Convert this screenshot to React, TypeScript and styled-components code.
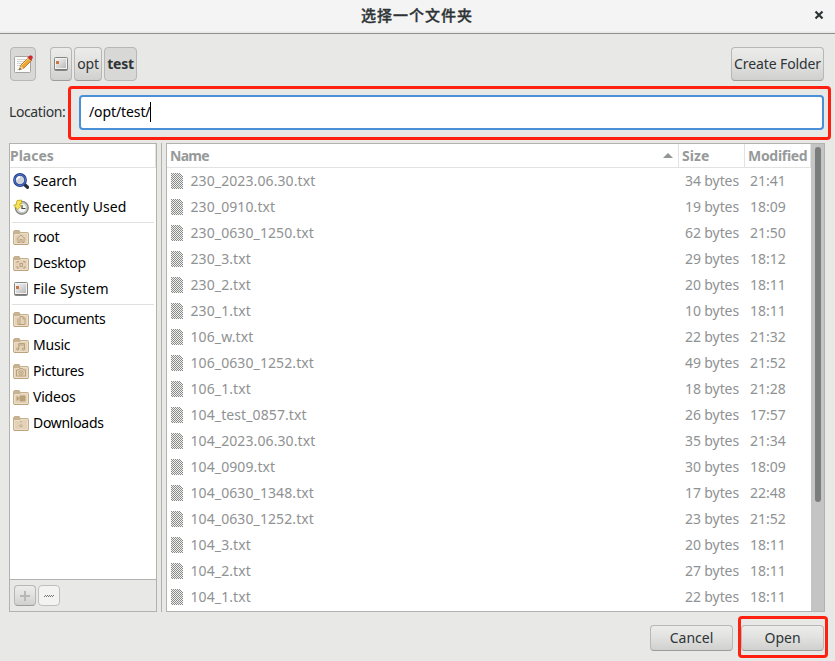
import React from "react";
import styled, { createGlobalStyle, css } from "styled-components";

const GlobalStyle = createGlobalStyle`
  * { box-sizing: border-box; }
  body { margin: 0; background: #e8e8e7; overflow: hidden; }
  svg { display: block; flex: none; }
`;

const Dialog = styled.main`
  width: 835px;
  height: 661px;
  display: flex;
  flex-direction: column;
  background: #e8e8e6;
  color: #2e3436;
  font-family: "Noto Sans", "Noto Sans CJK SC", sans-serif;
  font-size: 14px;
  line-height: 20px;
  white-space: nowrap;
`;

const TitleBar = styled.header`
  height: 34px;
  flex: none;
  display: grid;
  grid-template-columns: 32px 1fr 32px;
  align-items: center;
  padding-bottom: 3px;
  background: linear-gradient(#f4f4f4 31px, #e8e8e8 32px);
  border-bottom: 1px solid #8f8f8f;
`;

const Title = styled.h1`
  margin: 0 1px 1px 0;
  font: 500 15px/20px "Noto Sans CJK SC", sans-serif;
  -webkit-text-stroke: 0.35px #2e3436;
  letter-spacing: 1px;
  text-align: center;
`;

const Toolbar = styled.div`
  height: 34px;
  margin: 13px 11px 0 10px;
  display: flex;
`;

const Path = styled.nav`
  display: flex;
  gap: 2px;
  margin-left: 14px;
`;

const Button = styled.button<{ $w: number; $pressed?: boolean; $spacing?: number }>`
  width: ${(p) => p.$w}px;
  height: 100%;
  padding: 0;
  display: flex;
  align-items: center;
  justify-content: center;
  border: 1px solid #b7b7b3;
  border-bottom-color: #9d9d98;
  border-radius: 4px;
  background: linear-gradient(#ececeb, #e2e2e1 45%, #d0d0ce);
  color: #2e3436;
  font: inherit;
  letter-spacing: ${(p) => p.$spacing ?? 0}px;
  ${(p) =>
    p.$pressed &&
    css`
      background: #d8d8d7;
      border-color: #b7b7b5;
      font-weight: bold;
    `}
`;

const CreateButton = styled(Button)`
  margin-left: auto;
`;

const LocationRow = styled.div`
  height: 35px;
  margin: 14px 11px 0 9px;
  display: flex;
  align-items: center;
`;

const LocationLabel = styled.label`
  width: 70px;
  padding-bottom: 2px;
  letter-spacing: -0.4px;
`;

const Entry = styled.div`
  position: relative;
  flex: 1;
  height: 35px;
  display: flex;
  align-items: center;
  padding: 0 0 2px 8px;
  border: 2px solid #4a90d9;
  border-radius: 4px;
  background: #fff;
  color: #000;
  letter-spacing: -0.1px;
`;

const Caret = styled.span`
  width: 1px;
  height: 20px;
  background: #000;
`;

const Highlight = styled.span<{ $box: string }>`
  position: absolute;
  inset: ${(p) => p.$box};
  border: 3px solid #ff200f;
  border-radius: 4px;
  pointer-events: none;
`;

const Panes = styled.div`
  height: 469px;
  margin: 13px 10px 0 9px;
  display: grid;
  grid-template-columns: 148px 9px 1fr;
`;

const Splitter = styled.div`
  width: 1px;
  margin-left: 4px;
  background: #b2b2b0;
`;

const Sidebar = styled.aside`
  display: flex;
  flex-direction: column;
  border: 1px solid #b2b2ae;
  background: #fff;
  color: #000;
`;

const HeaderCell = styled.div<{ $spacing?: number }>`
  display: flex;
  align-items: center;
  height: 24px;
  border-right: 1px solid #e2e2e1;
  border-bottom: 1px solid #e2e2e1;
  color: #979a9a;
  font-weight: bold;
  letter-spacing: ${(p) => p.$spacing ?? 0}px;
`;

const Place = styled.div<{ $spacing: number }>`
  height: 26px;
  display: flex;
  align-items: center;
  gap: 4px;
  padding-left: 3px;
  letter-spacing: ${(p) => p.$spacing}px;
`;

const Separator = styled.hr`
  width: 142px;
  height: 1px;
  margin: 2px 2px 1px;
  border: 0;
  background: #e0e0df;
`;

const SidebarActions = styled.div`
  height: 32px;
  margin-top: auto;
  display: flex;
  gap: 2px;
  padding: 5px 4px;
  border-top: 1px solid #b2b2ae;
  background: #e8e8e6;
`;

const RemoveButton = styled(Button)`
  background: #f3f3f2;
  border-color: #c0c0ba;
`;

const FileView = styled.section`
  display: flex;
  border: 1px solid #b2b2ae;
  background: #fff;
`;

const FileTable = styled.div`
  flex: 1;
`;

const FileHeader = styled.div`
  display: grid;
  grid-template-columns: 512px 66px 66px;
  ${HeaderCell} { padding-left: 3px; }
`;

const SortArrow = styled.svg`
  margin: 0 5px 0 auto;
`;

const FileRow = styled.div`
  height: 26px;
  display: grid;
  grid-template-columns: 19.5px 484.5px 64px 1fr;
  align-items: center;
  padding-left: 4px;
  color: #8f9293;
`;

const FileName = styled.span`
  letter-spacing: 0.1px;
`;

const FileSize = styled.span`
  letter-spacing: -0.1px;
  text-align: right;
`;

const FileTime = styled.span`
  padding-left: 11px;
`;

const ScrollTrack = styled.div`
  width: 13px;
  padding: 3px 3px 0 4px;
  background: #c3c4c3;
`;

const ScrollThumb = styled.div`
  height: 355px;
  border-radius: 3px;
  background: #7b7d7d;
`;

const Actions = styled.footer`
  height: 26px;
  margin: 13px 11px 0 auto;
  display: flex;
  gap: 8px;
`;

const OpenWrap = styled.div`
  position: relative;
`;

const EditIcon = () => (
  <svg width="20" height="20" viewBox="0 0 20 20">
    <rect x="1.5" y="2.5" width="16" height="16" rx="1" fill="#fcfcfb" stroke="#a4a4a1" />
    <path d="M4 5.5h9M4 7.5h8M4 9.5h6M4 11.5h4M4 15.5h5" stroke="#c4c4c4" strokeWidth=".7" />
    <path d="M6 16l2-5 8-8 3 3-8 8z" fill="#f0a52e" stroke="#93611e" strokeWidth=".7" />
    <path d="M8.5 11.5l7-7" stroke="#ffd57a" />
    <path d="M6 16l2-4 2.5 2.5z" fill="#f4d2a0" />
    <path d="M6 16l1-2 1 1z" fill="#333" />
    <path d="M15 3.5l1.5-1.5q2-1 3 1 0 1.5-2 3z" fill="#df2828" stroke="#a81b1b" strokeWidth=".6" />
    <path d="M14.3 4.2l2.7 2.6" stroke="#c6c6c6" />
  </svg>
);

const DriveIcon = () => (
  <svg width="16" height="16" viewBox="0 0 16 16">
    <defs>
      <linearGradient id="drive" x2="1" y2="1">
        <stop stopColor="#f4f4f4" />
        <stop offset="1" stopColor="#b9b9b9" />
      </linearGradient>
    </defs>
    <rect x="1.5" y="1.5" width="13" height="13" rx="1" fill="#f2f2f2" stroke="#858581" />
    <rect x="3" y="3" width="10" height="9" fill="url(#drive)" />
    <path d="M2 13.5h12" stroke="#777" />
    <path d="M3 5h3v3H3z" fill="#c87943" />
  </svg>
);

const SearchIcon = () => (
  <svg width="16" height="16" viewBox="0 0 16 16">
    <path d="M11 11l3.5 3.3" stroke="#292c36" strokeWidth="3.3" strokeLinecap="round" />
    <circle cx="7" cy="7" r="5.6" fill="#cfd3da" stroke="#23408e" strokeWidth="2.6" />
    <circle cx="7" cy="7" r="5.5" fill="none" stroke="#5578cc" />
    <path d="M4 7q0-3 3-3" fill="none" stroke="#fff" strokeWidth="1.4" />
  </svg>
);

const RecentIcon = () => (
  <svg width="16" height="16" viewBox="0 0 16 16">
    <circle cx="8.8" cy="8.8" r="6.4" fill="#d6d6d1" stroke="#858781" strokeWidth="1.4" />
    <circle cx="9" cy="9" r="4.6" fill="#f6f6f3" stroke="#b4b5b0" strokeWidth=".7" />
    <path d="M9 6v3.5h3.5" fill="none" stroke="#444" strokeWidth="1.2" />
    <path d="M8.5 1L4 1.6 3 6H.6l4 4.6L9 6.3H6.6L7 4.5h1.5z" fill="#f6e35b" stroke="#c4a71d" strokeWidth=".8" />
  </svg>
);

const folderMarks: Record<string, React.ReactNode> = {
  root: <path d="M3.5 10L8 6l4.5 4M5 9.5v4h2v-3h2v3h2v-4" />,
  Desktop: <><path d="M4 8V6.5h2M10 6.5h2V8M4 11v2h2M10 13h2v-2" /><rect x="7" y="8.5" width="2.5" height="3" /></>,
  Documents: <><path d="M5 7.5v6h5M7 5.5h3l2 2v6H7z" /><path d="M10 5.5V8h2" /></>,
  Music: <><path d="M5.8 12V6.5h5.7V12M5.8 8h5.7" /><circle cx="4.7" cy="12" r="1.1" /><circle cx="10.4" cy="12" r="1.1" /></>,
  Pictures: <><path d="M3.5 7h2l1-1.5h3L10.5 7h2v6h-9z" /><circle cx="8" cy="9.8" r="2.2" /><circle cx="8" cy="9.8" r=".6" /></>,
  Videos: <path d="M7 7h5v5H7zM4 7.5l2 2-2 2z" fill="#bca27b" />,
  Downloads: <path d="M8 6v2M8 9v3M5.8 10L8 12.2 10.2 10" strokeDasharray="1.2 .6" />,
};

const FolderIcon = ({ name }: { name: string }) => (
  <svg width="16" height="16" viewBox="0 0 16 16">
    <path d="M.5 14V2.5L1.5 1.5h4.7l1 2h7q1.3 0 1.3 1V14q0 1.5-1 1.5h-13q-1 0-1-1.5z" fill="#c7b38f" stroke="#c3af8c" />
    <path d="M1.5 14.5v-9h5L8 4.5h6.5v10z" fill="#e3d2b8" stroke="#ecdec8" />
    <path d="M1 15.5h14" stroke="#bca37c" />
    <g fill="none" stroke="#b79c76" strokeWidth=".9">{folderMarks[name]}</g>
  </svg>
);

const FileIcon = () => (
  <svg width="12" height="16" viewBox="0 0 12 16" shapeRendering="crispEdges">
    <defs>
      <pattern id="dither" width="2" height="2" patternUnits="userSpaceOnUse">
        <path d="M0 0h1v1H0zM1 1h1v1H1z" fill="#888a87" />
      </pattern>
    </defs>
    <path d="M0 0h8l4 4v12H0z" fill="#f1f1f0" />
    <path d="M0 0h8l4 4v12H0z" fill="url(#dither)" />
  </svg>
);

const placeIcon = (name: string) => {
  if (name === "Search") return <SearchIcon />;
  if (name === "Recently Used") return <RecentIcon />;
  if (name === "File System") return <DriveIcon />;
  return <FolderIcon name={name} />;
};

const places: [string, number][][] = [
  [["Search", -0.1], ["Recently Used", 0.05]],
  [["root", -0.3], ["Desktop", -0.2], ["File System", 0.2]],
  [["Documents", -0.35], ["Music", -0.2], ["Pictures", -0.2], ["Videos", -0.2], ["Downloads", -0.3]],
];

const files = [
  ["230_2023.06.30.txt", "34", "21:41"],
  ["230_0910.txt", "19", "18:09"],
  ["230_0630_1250.txt", "62", "21:50"],
  ["230_3.txt", "29", "18:12"],
  ["230_2.txt", "20", "18:11"],
  ["230_1.txt", "10", "18:11"],
  ["106_w.txt", "22", "21:32"],
  ["106_0630_1252.txt", "49", "21:52"],
  ["106_1.txt", "18", "21:28"],
  ["104_test_0857.txt", "26", "17:57"],
  ["104_2023.06.30.txt", "35", "21:34"],
  ["104_0909.txt", "30", "18:09"],
  ["104_0630_1348.txt", "17", "22:48"],
  ["104_0630_1252.txt", "23", "21:52"],
  ["104_3.txt", "20", "18:11"],
  ["104_2.txt", "27", "18:11"],
  ["104_1.txt", "22", "18:11"],
];

export default function App() {
  return (
    <Dialog>
      <GlobalStyle />
      <TitleBar>
        <span />
        <Title>选择一个文件夹</Title>
        <svg width="32" height="12" viewBox="0 0 32 12">
          <path d="M12.5 2.5l7 7m0-7l-7 7" stroke="#2e3436" strokeWidth="2.2" />
        </svg>
      </TitleBar>
      <Toolbar>
        <Button $w={26} $pressed aria-label="Edit location"><EditIcon /></Button>
        <Path>
          <Button $w={22} aria-label="File System"><DriveIcon /></Button>
          <Button $w={28} $spacing={-0.2}>opt</Button>
          <Button $w={33} $pressed $spacing={-0.2}>test</Button>
        </Path>
        <CreateButton $w={93} $spacing={-0.1}>Create Folder</CreateButton>
      </Toolbar>
      <LocationRow>
        <LocationLabel>Location:</LocationLabel>
        <Entry>
          /opt/test/<Caret />
          <Highlight $box="-11px -9px -12px -13px" />
        </Entry>
      </LocationRow>
      <Panes>
        <Sidebar>
          <HeaderCell>Places</HeaderCell>
          {places.map((group, i) => (
            <React.Fragment key={i}>
              {i > 0 && <Separator />}
              {group.map(([name, spacing]) => (
                <Place key={name} $spacing={spacing}>{placeIcon(name)}{name}</Place>
              ))}
            </React.Fragment>
          ))}
          <SidebarActions>
            <Button $w={22} aria-label="Add">
              <svg width="10" height="10"><path d="M5 0v10M0 5h10" stroke="#b7b8b7" strokeWidth="2" /></svg>
            </Button>
            <RemoveButton $w={22} aria-label="Remove">
              <svg width="10" height="2" shapeRendering="crispEdges">
                <path d="M0 1.5h10" stroke="#777" strokeDasharray="1 1" />
                <path d="M1 .5h9" stroke="#777" strokeDasharray="1 1" />
              </svg>
            </RemoveButton>
          </SidebarActions>
        </Sidebar>
        <Splitter />
        <FileView>
          <FileTable>
            <FileHeader>
              <HeaderCell $spacing={-0.7}>
                Name
                <SortArrow width="10" height="5"><path d="M0 5l5-5 5 5z" fill="#929595" /></SortArrow>
              </HeaderCell>
              <HeaderCell $spacing={0.1}>Size</HeaderCell>
              <HeaderCell $spacing={-0.3}>Modified</HeaderCell>
            </FileHeader>
            {files.map(([name, size, time]) => (
              <FileRow key={name}>
                <FileIcon />
                <FileName>{name}</FileName>
                <FileSize>{size} bytes</FileSize>
                <FileTime>{time}</FileTime>
              </FileRow>
            ))}
          </FileTable>
          <ScrollTrack><ScrollThumb /></ScrollTrack>
        </FileView>
      </Panes>
      <Actions>
        <Button $w={83}>Cancel</Button>
        <OpenWrap>
          <Button $w={83}>Open</Button>
          <Highlight $box="-9px -4px -7px -3px" />
        </OpenWrap>
      </Actions>
    </Dialog>
  );
}
